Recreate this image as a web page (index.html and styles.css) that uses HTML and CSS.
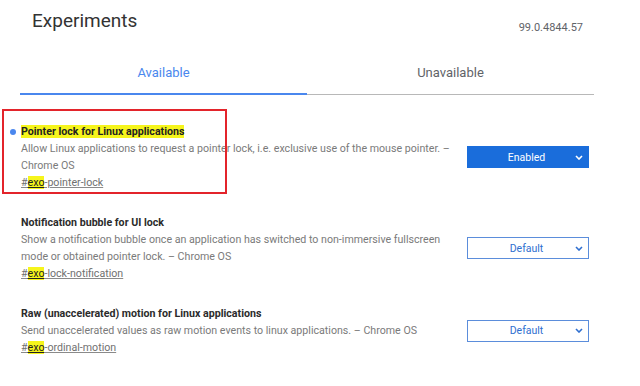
FILE: index.html
```html
<!DOCTYPE html>
<html lang="en">
<head>
<meta charset="utf-8">
<title>Experiments</title>
<link rel="stylesheet" href="styles.css">
</head>
<body>
<div class="page">
  <header class="header">
    <h1 class="title">Experiments</h1>
    <span class="version">99.0.4844.57</span>
  </header>
  <nav class="tabs">
    <div class="tab tab-active">Available</div>
    <div class="tab">Unavailable</div>
  </nav>
  <div class="list">
    <div class="item item-flagged">
      <div class="marker"><span class="dot"></span></div>
      <div class="text">
        <div class="name"><mark class="hl">Pointer lock for Linux applications</mark></div>
        <div class="desc">Allow Linux applications to request a pointer lock, i.e. exclusive use of the mouse pointer. – Chrome OS</div>
        <a class="link">#<mark class="hl-exo">exo</mark>-pointer-lock</a>
      </div>
      <div class="select select-enabled">
        <span class="select-label">Enabled</span>
        <svg class="chev" width="8" height="5" viewBox="0 0 8 5"><path d="M1 1 L4 4 L7 1" fill="none" stroke="currentColor" stroke-width="1.6"/></svg>
      </div>
      <div class="annotation"></div>
    </div>
    <div class="item">
      <div class="marker"></div>
      <div class="text">
        <div class="name">Notification bubble for UI lock</div>
        <div class="desc">Show a notification bubble once an application has switched to non-immersive fullscreen mode or obtained pointer lock. – Chrome OS</div>
        <a class="link">#<mark class="hl-exo">exo</mark>-lock-notification</a>
      </div>
      <div class="select">
        <span class="select-label">Default</span>
        <svg class="chev" width="8" height="5" viewBox="0 0 8 5"><path d="M1 1 L4 4 L7 1" fill="none" stroke="currentColor" stroke-width="1.6"/></svg>
      </div>
    </div>
    <div class="item">
      <div class="marker"></div>
      <div class="text">
        <div class="name">Raw (unaccelerated) motion for Linux applications</div>
        <div class="desc">Send unaccelerated values as raw motion events to linux applications. – Chrome OS</div>
        <a class="link">#<mark class="hl-exo">exo</mark>-ordinal-motion</a>
      </div>
      <div class="select">
        <span class="select-label">Default</span>
        <svg class="chev" width="8" height="5" viewBox="0 0 8 5"><path d="M1 1 L4 4 L7 1" fill="none" stroke="currentColor" stroke-width="1.6"/></svg>
      </div>
    </div>
  </div>
</div>
</body>
</html>
```
FILE: styles.css
```css
* { box-sizing: border-box; }
html, body { margin: 0; padding: 0; background: #ffffff; }
body {
  font-family: Roboto, "Liberation Sans", Arial, sans-serif;
  color: #333333;
  width: 640px;
  height: 386px;
  overflow: hidden;
}
.page { width: 640px; }

.header {
  display: flex;
  justify-content: space-between;
  align-items: flex-start;
  height: 40px;
  padding: 0 57px 0 32px;
}
.title {
  margin: 9px 0 0 0;
  font-size: 19px;
  line-height: 24px;
  font-weight: 400;
  color: #333333;
}
.version {
  margin-top: 21px;
  font-size: 11px;
  line-height: 14px;
  color: #5f6368;
}

.tabs {
  display: grid;
  grid-template-columns: 1fr 1fr;
  align-items: end;
  margin: 17px 46px 0 20px;
}
.tab {
  text-align: center;
  font-size: 13px;
  line-height: 16px;
  color: #5f6368;
  padding: 8px 0 13px;
  border-bottom: 1px solid #b8b8b8;
}
.tab-active {
  color: #4a87ee;
  padding-bottom: 12px;
  border-bottom: 2px solid #4a87ee;
}

.list {
  display: flex;
  flex-direction: column;
  gap: 23px;
  margin-top: 28px;
}
.item {
  position: relative;
  display: flex;
  align-items: center;
  padding-right: 51px;
}
.marker {
  flex: 0 0 21px;
  align-self: flex-start;
  height: 17px;
  display: flex;
  align-items: center;
  padding-left: 10px;
}
.dot {
  width: 6px;
  height: 6px;
  border-radius: 50%;
  background: #4a87ee;
}
.text {
  flex: 1 1 auto;
  font-size: 10.65px;
  line-height: 17px;
  padding-right: 10px;
}
.name {
  font-weight: 700;
  color: #2b2b2b;
}
.hl {
  background: #f6f51c;
  color: #222222;
  padding: 0;
}
.desc {
  color: #7a7a7a;
}
.link {
  color: #707070;
  text-decoration: underline;
  text-decoration-color: #8a8a8a;
}
.hl-exo {
  background: #f6f51c;
  color: #222222;
  text-decoration: underline;
}

.select {
  flex: 0 0 122px;
  height: 22px;
  display: flex;
  align-items: center;
  justify-content: space-between;
  padding: 0 5px 0 10px;
  border: 1px solid #5b8ddb;
  background: #ffffff;
  color: #2f6fd0;
  font-size: 10.5px;
}
.select-label {
  flex: 1;
  text-align: center;
}
.select-enabled {
  background: #1a6ddb;
  border-color: #1a6ddb;
  color: #ffffff;
}
.select-enabled .chev { color: #ffffff; }
.chev { color: #2f6fd0; }

.annotation {
  position: absolute;
  left: 2px;
  top: -14px;
  width: 225px;
  height: 85px;
  border: 2px solid #e3242b;
  pointer-events: none;
}
```
